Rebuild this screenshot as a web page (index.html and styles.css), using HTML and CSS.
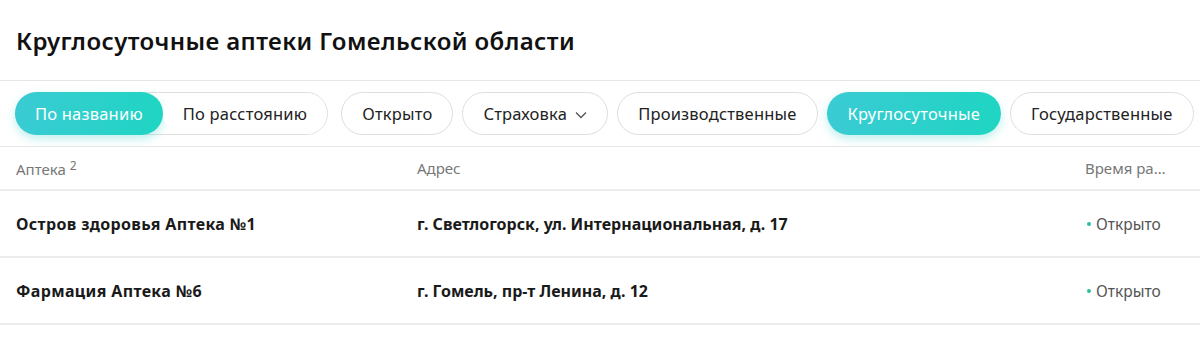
FILE: index.html
```html
<!DOCTYPE html>
<html lang="ru">
<head>
    <meta charset="UTF-8">
    <title>Круглосуточные аптеки</title>
    <link rel="stylesheet" href="styles.css">
</head>
<body>
    <div class="page-header">
        <h1>Круглосуточные аптеки Гомельской области</h1>
    </div>

    <div class="filters">
        <div class="sort-group">
            <button class="chip active">По названию</button>
            <button class="chip plain">По расстоянию</button>
        </div>
        <button class="chip">Открыто</button>
        <button class="chip">
            Страховка
            <svg class="chevron" width="12" height="8" viewBox="0 0 12 8"><path d="M1 1.5l5 5 5-5" fill="none" stroke="#555" stroke-width="1.3"/></svg>
        </button>
        <button class="chip">Производственные</button>
        <button class="chip active">Круглосуточные</button>
        <button class="chip">Государственные</button>
    </div>

    <div class="table">
        <div class="row head">
            <div class="cell">Аптека <sup>2</sup></div>
            <div class="cell">Адрес</div>
            <div class="cell truncate">Время работы</div>
        </div>
        <div class="row">
            <div class="cell name">Остров здоровья Аптека №1</div>
            <div class="cell addr">г. Светлогорск, ул. Интернациональная, д. 17</div>
            <div class="cell status">Открыто</div>
        </div>
        <div class="row">
            <div class="cell name">Фармация Аптека №6</div>
            <div class="cell addr">г. Гомель, пр-т Ленина, д. 12</div>
            <div class="cell status">Открыто</div>
        </div>
    </div>
</body>
</html>
```

FILE: styles.css
```css
* {
    box-sizing: border-box;
    margin: 0;
    padding: 0;
}

body {
    font-family: 'Noto Sans', 'Open Sans', sans-serif;
    background: #fff;
    color: #1a1a1a;
    width: 1200px;
    overflow: hidden;
}

.page-header {
    height: 81px;
    padding: 0 16px;
    display: flex;
    align-items: center;
    border-bottom: 1px solid #e6e6e6;
}

h1 {
    font-size: 24px;
    font-weight: 600;
    color: #111;
    letter-spacing: 0.4px;
}

.filters {
    display: flex;
    align-items: center;
    gap: 9px;
    padding: 11px 15px;
    border-bottom: 1px solid #e6e6e6;
    white-space: nowrap;
    overflow: hidden;
}

.sort-group {
    display: flex;
    border: 1px solid #dedede;
    border-radius: 22px;
    margin-right: 4px;
}

.chip {
    font-family: inherit;
    font-size: 16.5px;
    letter-spacing: 0.2px;
    color: #222;
    height: 43px;
    padding: 0 20px;
    border: 1px solid #dedede;
    border-radius: 22px;
    background: #fff;
    display: flex;
    align-items: center;
    gap: 8px;
    flex-shrink: 0;
}

.sort-group .chip {
    height: 41px;
    border: none;
}

.chip.active {
    background: linear-gradient(90deg, #3acbd4, #1fd5c2);
    color: #fff;
    border-color: transparent;
    box-shadow: 0 4px 10px rgba(40, 205, 200, 0.3);
}

.sort-group .chip.active {
    height: 43px;
    margin: -1px 0 -1px -1px;
}

.chevron {
    margin-top: 2px;
}

.row {
    display: grid;
    grid-template-columns: 401px 668px 115px;
    padding-left: 16px;
    align-items: center;
    height: 67px;
    border-bottom: 2px solid #ececec;
}

.row.head {
    height: 44px;
    font-size: 15px;
    color: #777;
}

.row.head sup {
    font-size: 12px;
    vertical-align: 5px;
}

.truncate {
    overflow: hidden;
    text-overflow: ellipsis;
    white-space: nowrap;
    padding-right: 27px;
}

.name,
.addr {
    font-size: 16px;
    font-weight: 700;
    color: #1a1a1a;
}

.name {
    letter-spacing: 0.35px;
}

.status {
    font-size: 15.5px;
    color: #555;
}

.status::before {
    content: '';
    display: inline-block;
    width: 4px;
    height: 4px;
    border-radius: 50%;
    background: #2bbf9a;
    margin: 0 5px 3px 2px;
    vertical-align: middle;
}
```
